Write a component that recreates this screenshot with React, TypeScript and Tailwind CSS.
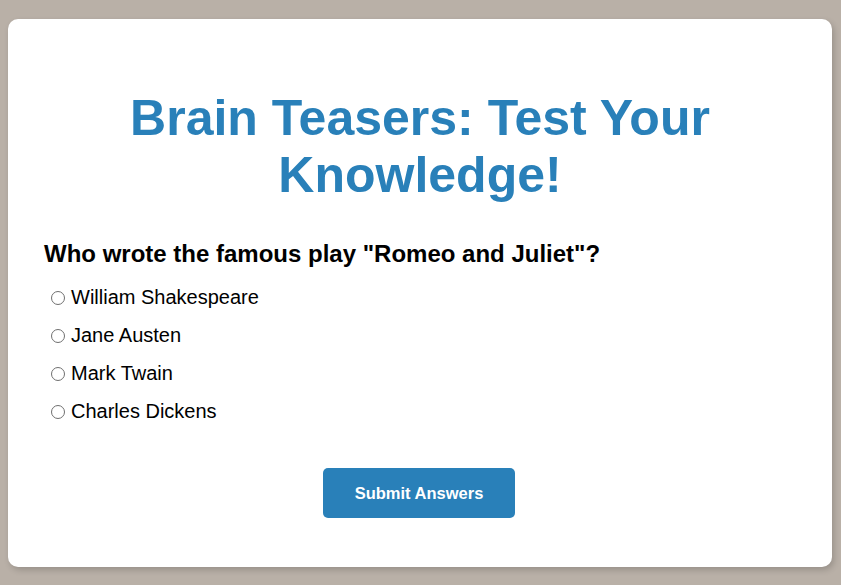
import React from "react";

const options = ["William Shakespeare", "Jane Austen", "Mark Twain", "Charles Dickens"];

export default function App() {
  return (
    <div
      className="min-h-[585px] w-full bg-[#b9b0a7] pt-[19px] pl-[8px] pr-[9px] pb-[18px]"
      style={{ fontFamily: '"Liberation Sans", Arial, sans-serif' }}
    >
      <div className="h-[548px] w-[824px] rounded-[10px] bg-white shadow-[2px_3px_6px_rgba(0,0,0,0.18)] px-[36px] pt-[71px]">
        <h1 className="text-center text-[50px] leading-[57px] font-bold text-[#2980b9]">
          Brain Teasers: Test Your
          <br />
          Knowledge!
        </h1>
        <h2 className="mt-[36px] text-[24px] leading-[28px] font-bold text-black">
          Who wrote the famous play "Romeo and Juliet"?
        </h2>
        <div className="mt-[18px] flex flex-col gap-[15px]">
          {options.map((o) => (
            <label key={o} className="flex h-[23px] items-center text-[20px] leading-[23px] text-black">
              <span className="ml-[7px] mr-[6px] box-border h-[14px] w-[14px] shrink-0 rounded-full border border-[#6f6f6f] bg-white" />
              {o}
            </label>
          ))}
        </div>
        <div className="mt-[45px] flex justify-center">
          <button className="mr-[2px] h-[50px] w-[192px] rounded-[5px] bg-[#2980b9] text-[16.5px] font-bold text-white">
            Submit Answers
          </button>
        </div>
      </div>
    </div>
  );
}
